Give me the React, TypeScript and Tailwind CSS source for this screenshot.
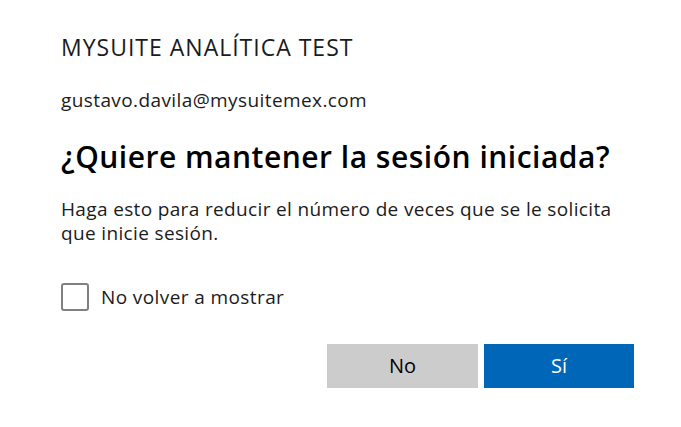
import React from "react";

export default function App() {
  return (
    <div
      className="w-[681px] h-[427px] bg-white text-[#1b1b1b] overflow-hidden"
      style={{ fontFamily: '"Open Sans", "Noto Sans", sans-serif' }}
    >
      <div className="pl-[61px] pr-[47px] pt-[33px] flex flex-col">
        <div className="text-[23px] leading-[28px] tracking-[1px] text-[#1b1b1b]">MYSUITE ANALÍTICA TEST</div>
        <div className="mt-[27px] text-[19px] leading-[24px] tracking-[0.4px] text-[#1b1b1b]">gustavo.davila@mysuitemex.com</div>
        <h1 className="mt-[26px] text-[30px] leading-[38px] tracking-[0.5px] font-semibold text-black whitespace-nowrap">
          ¿Quiere mantener la sesión iniciada?
        </h1>
        <p className="mt-[21px] text-[19px] leading-[24px] tracking-[0.35px] text-[#1b1b1b] whitespace-nowrap">
          Haga esto para reducir el número de veces que se le solicita
          <br />
          que inicie sesión.
        </p>
        <label className="mt-[38px] flex items-center gap-[12px]">
          <span className="w-[28px] h-[28px] border-2 border-[#808080] rounded-[3px] bg-white" />
          <span className="text-[19px] leading-[24px] tracking-[0.4px] text-[#1b1b1b]">No volver a mostrar</span>
        </label>
        <div className="mt-[33px] flex justify-end gap-[6px]">
          <button className="w-[151px] h-[44px] bg-[#cccccc] text-[20px] text-black">No</button>
          <button className="w-[150px] h-[44px] bg-[#0067b8] text-[20px] text-white">Sí</button>
        </div>
      </div>
    </div>
  );
}
